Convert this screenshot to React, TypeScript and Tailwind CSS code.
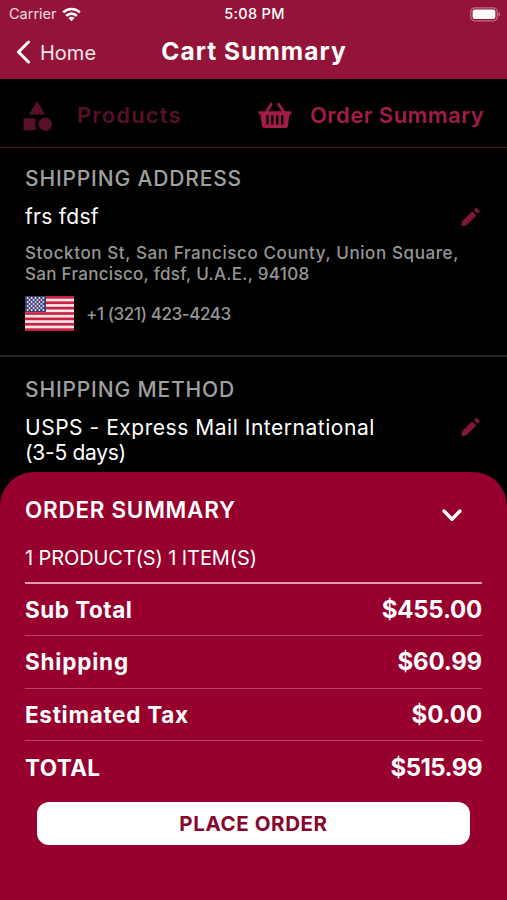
import React from 'react';
import { MdCategory } from 'react-icons/md';

interface SummaryRow {
  label: string;
  amount: string;
  labelClass: string;
  amountClass: string;
}

const rows: SummaryRow[] = [
  { label: 'Sub Total', amount: '$455.00', labelClass: 'tracking-[0.5px]', amountClass: 'tracking-[-0.2px]' },
  { label: 'Shipping', amount: '$60.99', labelClass: 'tracking-[0.8px]', amountClass: 'tracking-[-0.2px]' },
  { label: 'Estimated Tax', amount: '$0.00', labelClass: 'tracking-[0.7px]', amountClass: 'tracking-[-0.1px]' },
  { label: 'TOTAL', amount: '$515.99', labelClass: 'tracking-[0.4px]', amountClass: 'tracking-[-0.5px]' },
];

function WifiIcon() {
  return (
    <svg width="19" height="15" viewBox="0 0 19 15" fill="none" stroke="#fff" strokeWidth="2.6">
      <path d="M1.2 5.4a11.8 11.8 0 0 1 16.6 0" />
      <path d="M4.2 8.8a7.5 7.5 0 0 1 10.6 0" />
      <path d="M9.5 14.2 6.4 11a4.4 4.4 0 0 1 6.2 0z" fill="#fff" stroke="none" />
    </svg>
  );
}

function BatteryIcon() {
  return (
    <svg width="31" height="15" viewBox="0 0 31 15">
      <rect x="0.8" y="0.8" width="26.4" height="13" rx="4" fill="none" stroke="#fff" strokeOpacity="0.4" strokeWidth="1.2" />
      <rect x="2.6" y="2.6" width="22.8" height="9.4" rx="2.2" fill="#fff" />
      <path d="M28.6 5a2.6 2.6 0 0 1 0 4.6z" fill="#fff" fillOpacity="0.5" />
    </svg>
  );
}

function BasketIcon() {
  return (
    <svg width="34" height="28" viewBox="0 0 34 28">
      <path d="M13.2 2.2 8 10.4M20.6 2.2l5.4 8.2" stroke="#a31c49" strokeWidth="2.8" strokeLinecap="round" />
      <path
        fill="#a31c49"
        fillRule="evenodd"
        d="M1.6 9.2h30.6a1.2 1.2 0 0 1 1.2 1.2v.9a1.2 1.2 0 0 1-1.2 1.2h-.6l-1.7 11.4a2.6 2.6 0 0 1-2.6 2.2H6.7a2.6 2.6 0 0 1-2.6-2.2L2.4 12.5h-.8a1.2 1.2 0 0 1-1.2-1.2v-.9a1.2 1.2 0 0 1 1.2-1.2zM8.3 13.2v9.2h2.4v-9.2zM13.1 13.2v9.2h2.4v-9.2zM18.1 13.2v9.2h2.4v-9.2zM23 13.2v9.2h2.4v-9.2z"
      />
    </svg>
  );
}

function PencilIcon() {
  return (
    <svg width="20" height="20" viewBox="0 0 20 20" fill="#80173a" stroke="#80173a" strokeWidth="1.4" strokeLinejoin="round">
      <path d="M1.2 18.2 1.6 14.7 11.2 5.2l3.2 3.2L4.8 17.8z" />
      <path d="M13.8 2.9l1.4-1.4 2.9 2.9-1.4 1.4z" />
    </svg>
  );
}

function UsFlag() {
  const stripes = [0, 2, 4, 6, 8, 10, 12];
  const stars = [0, 1, 2, 3, 4, 5, 6];
  return (
    <svg width="49" height="35" viewBox="0 0 49 35">
      <rect width="49" height="35" fill="#f3e6ea" />
      {stripes.map((i) => (
        <rect key={i} y={(i * 35) / 13} width="49" height={35 / 13} fill="#c8203f" />
      ))}
      <rect width="21" height="16" fill="#3f3d72" />
      {stars.map((r) =>
        Array.from({ length: r % 2 ? 4 : 5 }, (_, c) => (
          <circle key={`${r}-${c}`} cx={2.7 + c * 3.9 + (r % 2 ? 1.95 : 0)} cy={2 + r * 2} r="1" fill="#e8e6f2" />
        )),
      )}
    </svg>
  );
}

export default function App() {
  return (
    <div className="flex h-[900px] w-[507px] flex-col overflow-hidden bg-black font-['Inter',sans-serif] whitespace-nowrap text-white">
      <header className="h-[79px] shrink-0 bg-[#941338]">
        <div className="grid h-7 grid-cols-3 items-center pr-[6px] pl-[9px] text-[14.5px]">
          <div className="flex items-center gap-[5px] text-white/85">
            <span>Carrier</span>
            <WifiIcon />
          </div>
          <span className="pr-[1px] text-center font-medium tracking-[0.3px]">5:08 PM</span>
          <div className="flex justify-end">
            <BatteryIcon />
          </div>
        </div>
        <div className="grid h-[48px] grid-cols-[146px_1fr_146px] items-center">
          <button className="flex items-center gap-[9px] pl-[16px] text-[20px] text-white/90">
            <svg width="15" height="24" viewBox="0 0 15 24" fill="none" stroke="#fff" strokeWidth="3" strokeLinecap="round" strokeLinejoin="round">
              <path d="M12.5 2 2.5 12l10 10" />
            </svg>
            <span className="pt-[1px]">Home</span>
          </button>
          <h1 className="pb-[1px] pl-[1px] text-center text-[24.5px] font-bold tracking-[1.05px]">Cart Summary</h1>
        </div>
      </header>

      <nav className="flex h-[69px] shrink-0 items-center border-b border-[#520d25] pt-[5px] pl-[19px] text-[22px] font-semibold">
        <div className="flex w-[239px] items-center gap-[22px] text-[#571126]">
          <MdCategory size={36} />
          <span className="tracking-[1.15px]">Products</span>
        </div>
        <div className="flex items-center gap-[18px] text-[#a31c49]">
          <BasketIcon />
          <span className="tracking-[0.45px]">Order Summary</span>
        </div>
      </nav>

      <section className="h-[209px] shrink-0 border-b-2 border-[#252525] pt-[17px] pr-[26px] pl-[25px]">
        <h2 className="text-[21px] leading-[28px] font-medium tracking-[0.85px] text-[#a0a0a0]">SHIPPING ADDRESS</h2>
        <div className="mt-[10px] flex h-7 items-center justify-between">
          <span className="text-[21px] tracking-[0.3px]">frs fdsf</span>
          <PencilIcon />
        </div>
        <p className="mt-[12px] text-[17px] leading-[21px] font-medium text-[#969696]">
          <span className="block tracking-[0.6px]">Stockton St, San Francisco County, Union Square,</span>
          <span className="block tracking-[0.3px]">San Francisco, fdsf, U.A.E., 94108</span>
        </p>
        <div className="mt-[11px] flex items-center gap-[12px] text-[17px] font-medium text-[#969696]">
          <UsFlag />
          <span className="pt-[2px] tracking-[-0.4px]">+1 (321) 423-4243</span>
        </div>
      </section>

      <section className="flex h-[115px] shrink-0 flex-col pt-[19px] pr-[26px] pl-[25px]">
        <h2 className="text-[21px] leading-[28px] font-medium tracking-[0.85px] text-[#a0a0a0]">SHIPPING METHOD</h2>
        <div className="mt-[11px] flex items-start justify-between text-[21px] leading-[25px]">
          <p>
            <span className="block tracking-[0.53px]">USPS - Express Mail International</span>
            <span className="block tracking-[-0.3px]">(3-5 days)</span>
          </p>
          <div className="pt-[2px]">
            <PencilIcon />
          </div>
        </div>
      </section>

      <section className="flex-1 rounded-t-[34px] bg-[#97002e] px-[25px] pt-[22px]">
        <div className="flex h-[30px] items-center justify-between pr-[20px]">
          <h2 className="pt-[1px] text-[22.5px] font-semibold tracking-[0.72px]">ORDER SUMMARY</h2>
          <svg className="mt-[13px]" width="20" height="13" viewBox="0 0 20 13" fill="none" stroke="#fff" strokeWidth="3.4" strokeLinecap="round" strokeLinejoin="round">
            <path d="M2 2l8 8.3L18 2" />
          </svg>
        </div>
        <p className="mt-[20px] h-[28px] text-[20px] leading-[28px] tracking-[-0.1px]">1 PRODUCT(S) 1 ITEM(S)</p>
        <div className="mt-[10px] border-t-2 border-[#df9bae]">
          {rows.map((row) => (
            <div key={row.label} className="flex h-[52.5px] items-center justify-between border-b border-[#b8416a] pt-[1px] first:h-[52px] last:border-b-0">
              <span className={`text-[22.5px] font-bold ${row.labelClass}`}>{row.label}</span>
              <span className={`text-[24px] font-bold ${row.amountClass}`}>{row.amount}</span>
            </div>
          ))}
        </div>
        <button className="mx-[12px] mt-[8.5px] block h-[43px] w-[433px] rounded-[12px] bg-white pt-[2px] text-[20.5px] font-bold tracking-[0.6px] text-[#87062e]">
          PLACE ORDER
        </button>
      </section>
    </div>
  );
}
